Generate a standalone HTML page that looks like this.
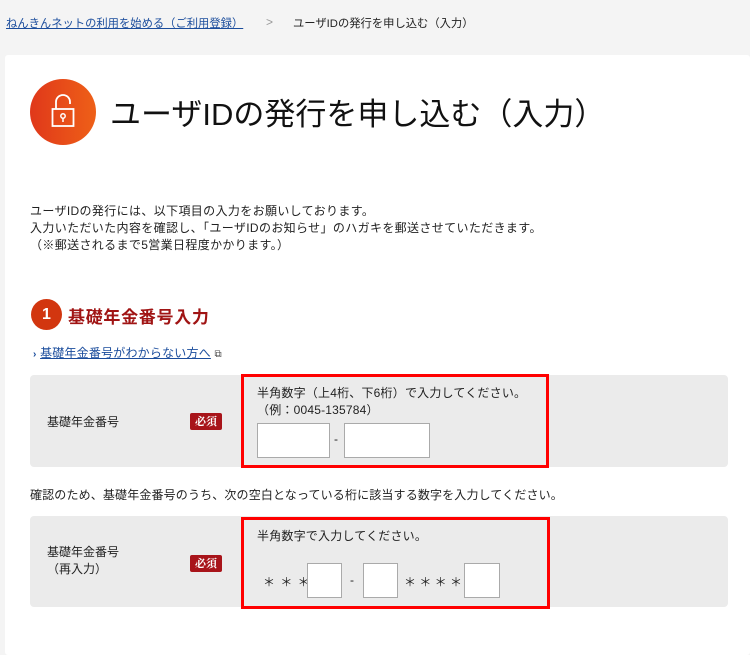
<!DOCTYPE html>
<html><head><meta charset="utf-8"><style>
*{margin:0;padding:0;box-sizing:border-box}
body{width:750px;height:641px;background:#f4f4f4;font-family:"Liberation Sans","Noto Sans CJK JP",sans-serif;color:#222;position:relative;overflow:hidden;font-size:12px}
.a{position:absolute;white-space:nowrap}
.card{position:absolute;left:5px;top:55px;width:745px;height:600px;background:#fff;border-radius:3px}
.gray{position:absolute;left:30px;width:698px;background:#ebebeb;border-radius:4px}
.red{position:absolute;border:3px solid #f00}
.badge{position:absolute;left:190px;width:32px;height:17px;background:#a8141a;color:#fff;font-weight:bold;font-size:11px;text-align:center;line-height:17px;border-radius:2px;font-family:"Noto Serif CJK SC",serif}
.in{position:absolute;background:#fff;border:1px solid #aaa}
</style></head><body>
<div class="a" style="left:6px;top:15px;color:#1a4c9c;text-decoration:underline;font-size:11.3px">ねんきんネットの利用を始める（ご利用登録）</div>
<div class="a" style="left:266px;top:15px;color:#999">&gt;</div>
<div class="a" style="left:293px;top:15px;font-size:11.3px">ユーザIDの発行を申し込む（入力）</div>
<div class="card"></div>
<svg class="a" style="left:30px;top:79px" width="66" height="66" viewBox="0 0 66 66">
<defs><linearGradient id="g" x1="0" x2="1"><stop offset="0" stop-color="#e0381a"/><stop offset="1" stop-color="#ee6018"/></linearGradient></defs>
<circle cx="33" cy="33" r="33" fill="url(#g)"/>
<path d="M26 30v-7a7 7 0 0 1 14 0v2" fill="none" stroke="#fff" stroke-width="1.8"/>
<rect x="22.5" y="30" width="21" height="17" fill="none" stroke="#fff" stroke-width="1.8"/>
<circle cx="33" cy="37" r="2.2" fill="none" stroke="#fff" stroke-width="1.5"/>
<path d="M33 39v4" stroke="#fff" stroke-width="1.5"/>
</svg>
<div class="a" style="left:110px;top:89px;font-size:31px;color:#111">ユーザIDの発行を申し込む（入力）</div>
<div class="a" style="left:30px;top:203px;line-height:16.8px;letter-spacing:0.36px">ユーザIDの発行には、以下項目の入力をお願いしております。<br>入力いただいた内容を確認し、「ユーザIDのお知らせ」のハガキを郵送させていただきます。<br>（※郵送されるまで5営業日程度かかります。）</div>
<div class="a" style="left:31px;top:299px;width:31px;height:31px;border-radius:50%;background:#d2360f;color:#fff;font-weight:bold;font-size:16px;text-align:center;line-height:31px">1</div>
<div class="a" style="left:68px;top:303px;font-size:17px;letter-spacing:0.7px;font-weight:bold;color:#a01414">基礎年金番号入力</div>
<div class="a" style="left:33px;top:344px;color:#1a4c9c;letter-spacing:0.2px"><b style="font-size:10px">›</b> <span style="text-decoration:underline">基礎年金番号がわからない方へ</span> <span style="color:#444;font-size:10px">⧉</span></div>
<div class="gray" style="top:375px;height:92px"></div>
<div class="a" style="left:47px;top:413px">基礎年金番号</div>
<div class="badge" style="top:413px">必須</div>
<div class="red" style="left:241px;top:374px;width:308px;height:94px"></div>
<div class="a" style="left:257px;top:385px;line-height:17px;letter-spacing:0.2px">半角数字（上4桁、下6桁）で入力してください。<br>（例：0045-135784）</div>
<div class="in" style="left:257px;top:423px;width:73px;height:35px"></div>
<div class="a" style="left:334px;top:432px">-</div>
<div class="in" style="left:344px;top:423px;width:86px;height:35px"></div>
<div class="a" style="left:30px;top:486px;letter-spacing:0.15px">確認のため、基礎年金番号のうち、次の空白となっている桁に該当する数字を入力してください。</div>
<div class="gray" style="top:516px;height:91px"></div>
<div class="a" style="left:47px;top:544px;line-height:17px">基礎年金番号<br>（再入力）</div>
<div class="badge" style="top:555px">必須</div>
<div class="red" style="left:241px;top:517px;width:309px;height:92px"></div>
<div class="a" style="left:257px;top:527px;letter-spacing:0.2px">半角数字で入力してください。</div>
<div class="a" style="left:263px;top:573px;font-size:12px;letter-spacing:1px">＊ ＊ ＊</div>
<div class="in" style="left:307px;top:563px;width:35px;height:35px"></div>
<div class="a" style="left:350px;top:573px">-</div>
<div class="in" style="left:363px;top:563px;width:35px;height:35px"></div>
<div class="a" style="left:404px;top:573px;font-size:12px;letter-spacing:0px">＊ ＊ ＊ ＊</div>
<div class="in" style="left:464px;top:563px;width:36px;height:35px"></div>
</body></html>
